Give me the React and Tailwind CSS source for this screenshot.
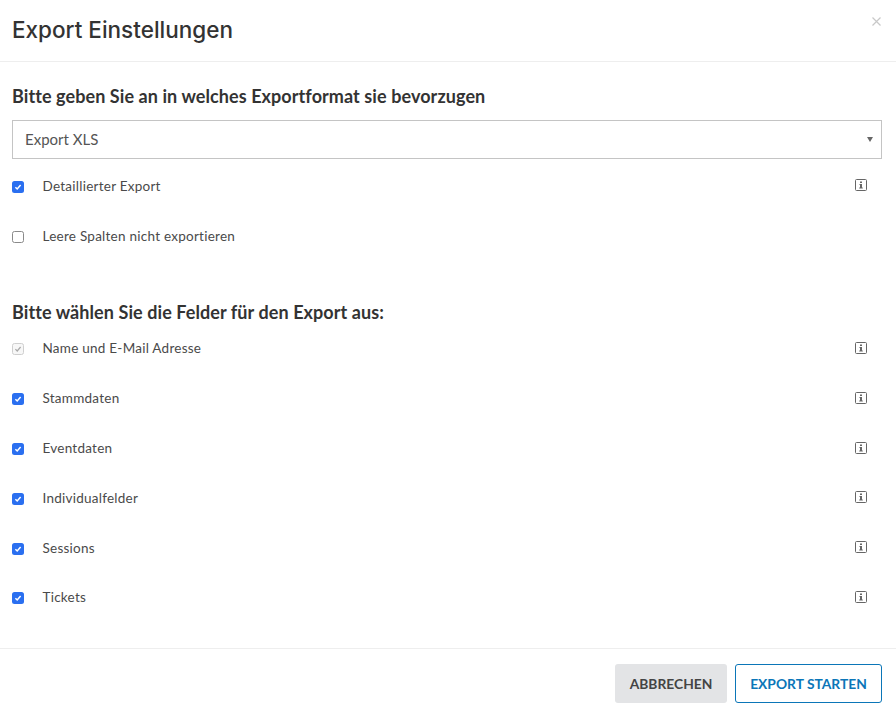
import React from "react";

const Info = () => (
  <svg width="12" height="12" viewBox="0 0 12 12" className="block text-[#666]" fill="none">
    <rect x="0.5" y="0.5" width="11" height="11" rx="1" stroke="currentColor" />
    <path d="M5 2.5h2V4H5zM4.5 5H7v3.5h.8v1H4.2v-1H5V6h-.5z" fill="currentColor" />
  </svg>
);

const Box = ({ state }) => {
  if (state === "on") {
    return (
      <span className="flex h-3 w-3 items-center justify-center rounded-[2.5px] bg-[#2a6ff0]">
        <svg width="8" height="8" viewBox="0 0 8 8" fill="none">
          <path d="M1.4 4.2 3.2 6l3.4-4" stroke="#fff" strokeWidth="1.5" />
        </svg>
      </span>
    );
  }
  if (state === "disabled") {
    return (
      <span className="flex h-3 w-3 items-center justify-center rounded-[2.5px] border border-[#cfcfcf] bg-[#f7f7f7]">
        <svg width="8" height="8" viewBox="0 0 8 8" fill="none">
          <path d="M1.4 4.2 3.2 6l3.4-4" stroke="#a8a8a8" strokeWidth="1.2" />
        </svg>
      </span>
    );
  }
  return <span className="block h-3 w-3 rounded-[2.5px] border border-[#8a8a8a] bg-white" />;
};

const Row = ({ label, state = "on", info = true }) => (
  <div className="flex h-[49.8px] items-center">
    <div className="mt-[2px] w-[30.5px] shrink-0">
      <Box state={state} />
    </div>
    <span className="flex-1 text-[13.5px] tracking-[0.25px] text-[#4a4a4a]">{label}</span>
    {info && (
      <div className="mb-px mr-[15px]">
        <Info />
      </div>
    )}
  </div>
);

export default function App() {
  return (
    <div className="h-[716px] w-[896px] bg-white font-['Lato','Noto_Sans',sans-serif]">
      <header className="relative flex h-[62px] items-center border-b border-[#eeeeee] px-3">
        <h1 className="mb-[1px] font-['Inter',sans-serif] text-[22.5px] font-medium text-[#333]">Export Einstellungen</h1>
        <svg width="9" height="9" viewBox="0 0 9 9" fill="none" className="absolute right-[15px] top-[17px]">
          <path d="M.5.5l8 8M8.5.5l-8 8" stroke="#c8c8c8" strokeWidth="1.2" />
        </svg>
      </header>

      <main className="h-[586px] px-3 pr-[14px]">
        <h2 className="pt-[23px] text-[18px] font-bold leading-[23px] tracking-[0.08px] text-[#333]">
          Bitte geben Sie an in welches Exportformat sie bevorzugen
        </h2>
        <div className="mt-[12px] flex h-[39px] items-center justify-between border border-[#c4c4c4] pl-3 pr-2">
          <span className="mb-[1px] text-[15px] text-[#555]">Export XLS</span>
          <span className="h-0 w-0 border-x-[3px] border-t-[5px] border-x-transparent border-t-[#666]" />
        </div>
        <div className="mt-[2px]">
          <Row label="Detaillierter Export" />
          <Row label="Leere Spalten nicht exportieren" state="off" info={false} />
        </div>
        <h2 className="mt-[40px] text-[18px] font-bold leading-[23px] tracking-[0.08px] text-[#333]">
          Bitte wählen Sie die Felder für den Export aus:
        </h2>
        <div>
          <Row label="Name und E-Mail Adresse" state="disabled" />
          <Row label="Stammdaten" />
          <Row label="Eventdaten" />
          <Row label="Individualfelder" />
          <Row label="Sessions" />
          <Row label="Tickets" />
        </div>
      </main>

      <footer className="flex h-[68px] items-start justify-end gap-2 border-t border-[#eeeeee] px-3.5 pt-[15px]">
        <button className="h-[39px] w-[112px] rounded-[3px] bg-[#e3e4e6] pt-px text-[13.8px] font-bold text-[#444]">
          ABBRECHEN
        </button>
        <button className="h-[39px] w-[147px] rounded-[3px] border border-[#0b76b8] bg-white pt-px text-[13.8px] font-bold text-[#0b76b8]">
          EXPORT STARTEN
        </button>
      </footer>
    </div>
  );
}
